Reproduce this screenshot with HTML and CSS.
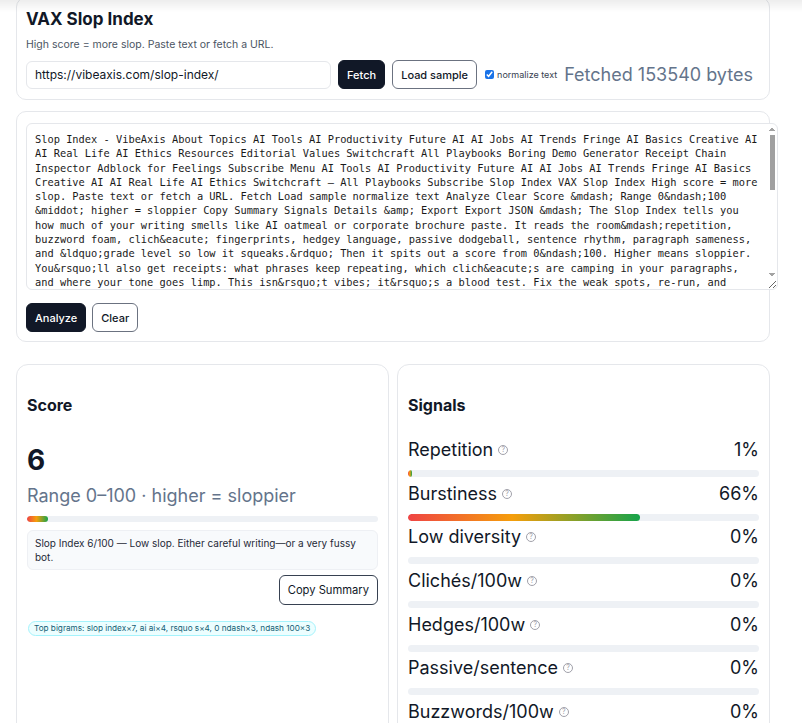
FILE: index.html
```html
<!DOCTYPE html>
<html lang="en">
<head>
    <meta charset="UTF-8">
    <title>VAX Slop Index</title>
    <link rel="stylesheet" href="styles.css">
</head>
<body>
<div class="topshade"></div>
<div class="wrap">
  <div class="card head-card">
    <h1 class="title">VAX Slop Index</h1>
    <p class="sub">High score = more slop. Paste text or fetch a URL.</p>
    <div class="row">
      <input class="url" type="text" value="https://vibeaxis.com/slop-index/">
      <button class="btn dark">Fetch</button>
      <button class="btn">Load sample</button>
      <label class="norm"><input type="checkbox" checked> normalize text</label>
      <span class="status">Fetched 153540 bytes</span>
    </div>
  </div>

  <div class="card text-card">
    <textarea class="src" spellcheck="false">Slop Index - VibeAxis About Topics AI Tools AI Productivity Future AI AI Jobs AI Trends Fringe AI Basics Creative AI
AI Real Life AI Ethics Resources Editorial Values Switchcraft All Playbooks Boring Demo Generator Receipt Chain
Inspector Adblock for Feelings Subscribe Menu AI Tools AI Productivity Future AI AI Jobs AI Trends Fringe AI Basics
Creative AI AI Real Life AI Ethics Switchcraft — All Playbooks Subscribe Slop Index VAX Slop Index High score = more
slop. Paste text or fetch a URL. Fetch Load sample normalize text Analyze Clear Score &amp;mdash; Range 0&amp;ndash;100
&amp;middot; higher = sloppier Copy Summary Signals Details &amp;amp; Export Export JSON &amp;mdash; The Slop Index tells you
how much of your writing smells like AI oatmeal or corporate brochure paste. It reads the room&amp;mdash;repetition,
buzzword foam, clich&amp;eacute; fingerprints, hedgey language, passive dodgeball, sentence rhythm, paragraph sameness,
and &amp;ldquo;grade level so low it squeaks.&amp;rdquo; Then it spits out a score from 0&amp;ndash;100. Higher means sloppier.
You&amp;rsquo;ll also get receipts: what phrases keep repeating, which clich&amp;eacute;s are camping in your paragraphs,
and where your tone goes limp. This isn&amp;rsquo;t vibes; it&amp;rsquo;s a blood test. Fix the weak spots, re-run, and
watch the number drop. How it works Paste text or drop a URL. We strip the page chrome, normalize the entities,
and count what matters: repeated n-grams, sentence length swings, vocabulary spread, stock phrases, hedges like
&amp;ldquo;arguably&amp;rdquo; and &amp;ldquo;it&amp;rsquo;s worth noting,&amp;rdquo; passive constructions, and the usual
buzzword parade. Each signal gets a weight; the weights roll up into one number. Low means human and specific.
High means the draft reads like it was assembled from a press kit. What the score is not It is not a detector.
It does not know who or what wrote your text. It only knows how the text behaves. Plenty of people write slop
all by themselves, and a careful prompt can produce clean copy. Treat the number like a smoke alarm, not a judge.
Tips Cut the throat-clearing intro. Replace abstractions with a concrete example. Vary sentence length on purpose.
Delete every &amp;ldquo;in today&amp;rsquo;s fast-paced world.&amp;rdquo; Read it out loud; if you get bored, so will they.
Related Receipt Chain Inspector Adblock for Feelings Boring Demo Generator Switchcraft All Playbooks Subscribe
Get the weekly VibeAxis note: one tool, one teardown, zero hype. Email address Subscribe About Editorial Values
Contact Privacy Terms &amp;copy; 2025 VibeAxis. Built with plain HTML and strong opinions.</textarea>
    <div class="row actions">
      <button class="btn dark">Analyze</button>
      <button class="btn">Clear</button>
    </div>
  </div>

  <div class="grid">
    <div class="card score-card">
      <h2 class="card-title">Score</h2>
      <div class="big">6</div>
      <div class="range">Range 0–100 · higher = sloppier</div>
      <div class="bar score-bar"><div class="fill" style="width:6%"></div></div>
      <div class="summary">Slop Index 6/100 — Low slop. Either careful writing—or a very fussy bot.</div>
      <div class="copy-row"><button class="btn">Copy Summary</button></div>
      <span class="chip">Top bigrams: slop index×7, ai ai×4, rsquo s×4, 0 ndash×3, ndash 100×3</span>
    </div>

    <div class="card signals-card">
      <h2 class="card-title">Signals</h2>
      <div class="sig">
        <div class="sig-head"><span class="label">Repetition <i class="help">?</i></span><span>1%</span></div>
        <div class="bar"><div class="fill" style="width:1%"></div></div>
      </div>
      <div class="sig">
        <div class="sig-head"><span class="label">Burstiness <i class="help">?</i></span><span>66%</span></div>
        <div class="bar"><div class="fill" style="width:66%"></div></div>
      </div>
      <div class="sig">
        <div class="sig-head"><span class="label">Low diversity <i class="help">?</i></span><span>0%</span></div>
        <div class="bar"><div class="fill none"></div></div>
      </div>
      <div class="sig">
        <div class="sig-head"><span class="label">Clichés/100w <i class="help">?</i></span><span>0%</span></div>
        <div class="bar"><div class="fill none"></div></div>
      </div>
      <div class="sig">
        <div class="sig-head"><span class="label">Hedges/100w <i class="help">?</i></span><span>0%</span></div>
        <div class="bar"><div class="fill none"></div></div>
      </div>
      <div class="sig">
        <div class="sig-head"><span class="label">Passive/sentence <i class="help">?</i></span><span>0%</span></div>
        <div class="bar"><div class="fill none"></div></div>
      </div>
      <div class="sig">
        <div class="sig-head"><span class="label">Buzzwords/100w <i class="help">?</i></span><span>0%</span></div>
        <div class="bar"><div class="fill none"></div></div>
      </div>
    </div>
  </div>
</div>
</body>
</html>
```

FILE: styles.css
```css
*{
    margin:0;
    padding:0;
    box-sizing:border-box;
}
body{
    font-family:Inter,"Noto Sans",sans-serif;
    color:#111827;
    background:#fff;
    padding:0 16px;
    overflow:hidden;
}
.topshade{
    position:fixed;
    top:0;
    left:0;
    right:0;
    height:12px;
    background:linear-gradient(rgba(0,0,0,0.07),rgba(0,0,0,0));
    pointer-events:none;
}
.wrap{
    width:754px;
}
.card{
    background:#fff;
    border:1px solid #e5e7eb;
    border-radius:10px;
}
.head-card{
    margin-top:-3px;
    padding:9px 9px 10px;
}
.title{
    font-size:17px;
    line-height:24px;
    font-weight:700;
}
.sub{
    margin-top:7px;
    font-size:10.5px;
    line-height:14px;
    color:#4b5563;
}
.row{
    display:flex;
    align-items:center;
    gap:7px;
    margin-top:8px;
}
.url{
    width:305px;
    height:28px;
    border:1px solid #e5e7eb;
    border-radius:6px;
    padding:0 8px;
    font-family:inherit;
    font-size:12px;
    color:#111827;
}
.btn{
    height:29px;
    padding:0 8px;
    border:1px solid #6b7280;
    border-radius:6px;
    background:#fff;
    font-family:inherit;
    font-size:11px;
    font-weight:500;
    color:#111827;
}
.btn.dark{
    background:#111827;
    border-color:#111827;
    color:#fff;
}
.norm{
    display:flex;
    align-items:center;
    gap:3px;
    font-size:9px;
    color:#374151;
    margin-left:1px;
}
.norm input{
    width:9px;
    height:9px;
    accent-color:#1a73e8;
}
.status{
    font-size:18px;
    color:#64748b;
}

.text-card{
    margin-top:11px;
    padding:11px 9px 9px;
}
/* scrollbars are hidden in the screenshot, so the thumb and arrows are painted */
.src{
    display:block;
    box-sizing:content-box;
    width:100%;
    height:149px;
    padding:8px;
    border:1px solid #e5e7eb;
    border-radius:6px;
    font-family:"DejaVu Sans Mono",monospace;
    font-size:10.35px;
    line-height:14.3px;
    color:#1a1a1a;
    resize:vertical;
    overflow-y:scroll;
    background:
        linear-gradient(#a0a0a0,#a0a0a0) right 2px top 11px/5px 55px no-repeat,
        linear-gradient(to bottom right,transparent 50%,#a3a3a3 50%) right 5px top 3px/3px 4px no-repeat,
        linear-gradient(to bottom left,transparent 50%,#a3a3a3 50%) right 2px top 3px/3px 4px no-repeat,
        linear-gradient(to top right,transparent 50%,#a3a3a3 50%) right 5px bottom 12px/3px 4px no-repeat,
        linear-gradient(to top left,transparent 50%,#a3a3a3 50%) right 2px bottom 12px/3px 4px no-repeat,
        #fff;
}
.actions{
    margin-top:13px;
    gap:6px;
}

.grid{
    display:grid;
    grid-template-columns:1fr 1fr;
    gap:8px;
    margin-top:22px;
}
.score-card,.signals-card{
    border-radius:12px;
    padding:10px;
    height:400px;
}
.card-title{
    margin-top:20px;
    font-size:16px;
    line-height:20px;
    font-weight:700;
}
.big{
    margin-top:27px;
    font-size:28px;
    line-height:36px;
    font-weight:700;
}
.range{
    margin-top:6px;
    font-size:18px;
    line-height:24px;
    color:#64748b;
}
.bar{
    height:7px;
    background:#eef1f5;
    border-radius:4px;
    overflow:hidden;
}
.score-bar{
    height:6px;
    margin-top:8px;
}
.fill{
    height:100%;
    min-width:3px;
    border-radius:4px;
    background:linear-gradient(90deg,#ef4444,#f59e0b 45%,#16a34a);
}
.fill.none{
    display:none;
}
.summary{
    margin-top:8px;
    padding:5px 7px;
    background:#f8fafc;
    border:1px solid #eef0f4;
    border-radius:6px;
    font-size:10px;
    line-height:14px;
    color:#1f2937;
}
.copy-row{
    display:flex;
    justify-content:flex-end;
    margin-top:5px;
}
.copy-row .btn{
    height:30px;
    border-color:#374151;
    font-weight:400;
    font-size:11.2px;
}
.chip{
    display:inline-block;
    margin-top:16px;
    margin-left:1px;
    padding:0 5px;
    height:15px;
    line-height:13px;
    font-size:8.2px;
    color:#155e75;
    background:#ecfeff;
    border:1px solid #a5f3fc;
    border-radius:8px;
}

.signals-card .card-title + .sig{
    margin-top:23px;
}
.sig{
    margin-bottom:4.7px;
}
.sig-head{
    display:flex;
    justify-content:space-between;
    align-items:center;
    font-size:18px;
    line-height:24px;
    color:#111827;
}
.label{
    display:flex;
    align-items:center;
    gap:5px;
}
.help{
    display:inline-block;
    width:10px;
    height:10px;
    border:1px solid #a1a1aa;
    border-radius:50%;
    font-style:normal;
    font-size:7px;
    line-height:8px;
    text-align:center;
    color:#a1a1aa;
}
.sig .bar{
    margin-top:8px;
}
```
